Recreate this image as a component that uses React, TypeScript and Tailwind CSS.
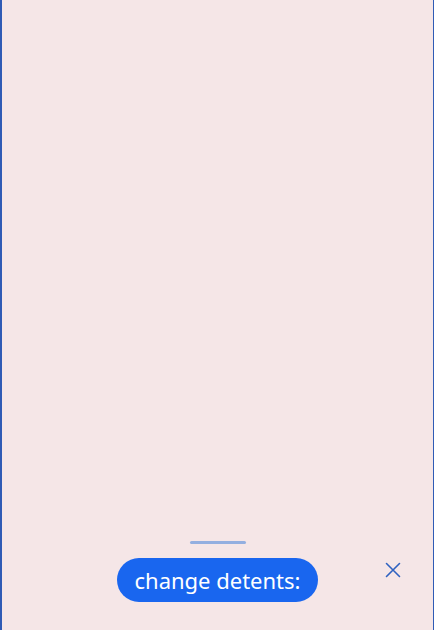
export default function App() {
  return (
    <div
      className="flex h-[630px] w-[434px] flex-col border-l-2 border-r border-[#2f5bb5] bg-[#f5e6e7]"
      style={{ fontFamily: '"Noto Sans", "Liberation Sans", sans-serif' }}
    >
      <div className="flex-1" />
      <div className="flex flex-col items-center pb-[28px]">
        <div className="h-[3px] w-[56px] rounded-full bg-[#93afe0]" />
        <div className="relative mt-[14px] flex w-full justify-center">
          <button className="flex h-[44px] w-[201px] items-center justify-center rounded-full bg-[#1966ef] pb-[1px] text-[22px] leading-none text-white">
            change detents:
          </button>
          <svg
            className="absolute right-[32px] top-[4px]"
            width="16"
            height="16"
            viewBox="0 0 16 16"
            fill="none"
            stroke="#2f62c0"
            strokeWidth="1.6"
            strokeLinecap="round"
          >
            <path d="M1.5 1.5 L14.5 14.5 M14.5 1.5 L1.5 14.5" />
          </svg>
        </div>
      </div>
    </div>
  );
}
